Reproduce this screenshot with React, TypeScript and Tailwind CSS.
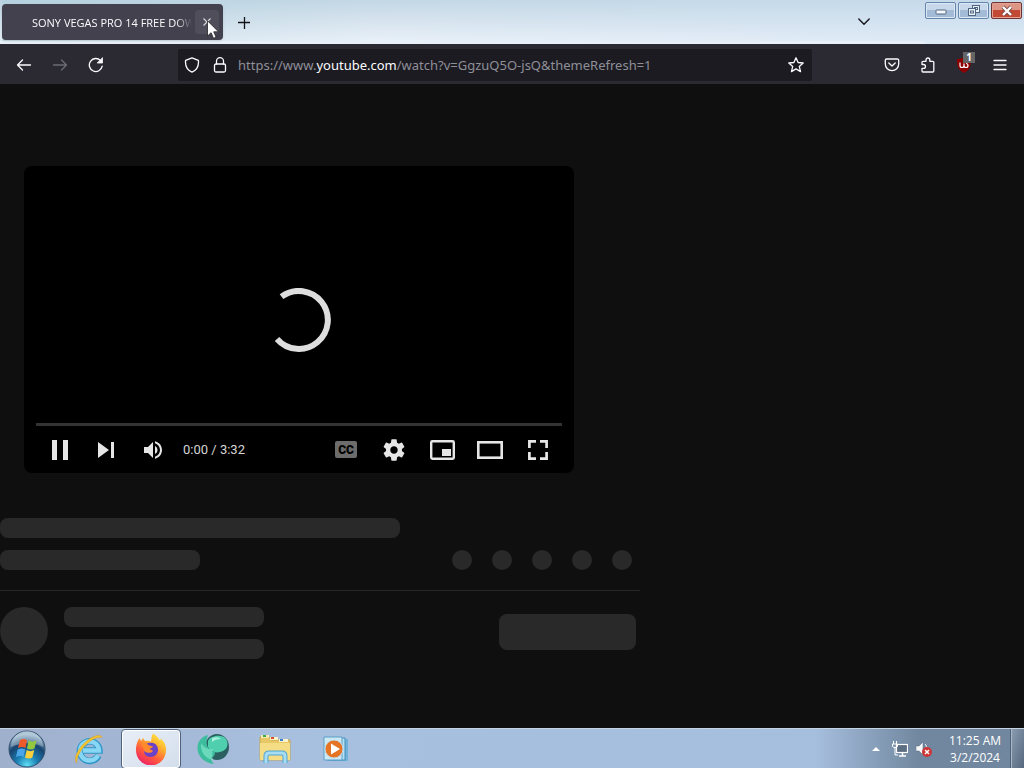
import type { ReactNode } from "react";

const urlParts = {
  prefix: "https://www.",
  domain: "youtube.com",
  path: "/watch?v=GgzuQ5O-jsQ&themeRefresh=1",
};

type ButtonProps = {
  label: string;
  children: ReactNode;
};

function ToolbarButton({ label, children }: ButtonProps) {
  return (
    <button
      type="button"
      aria-label={label}
      className="flex h-9 w-9 shrink-0 items-center justify-center rounded text-[#fbfbfe]"
    >
      {children}
    </button>
  );
}

function LineIcon({ children }: { children: ReactNode }) {
  return (
    <svg
      className="h-4 w-4"
      viewBox="0 0 16 16"
      fill="none"
      stroke="currentColor"
      strokeWidth="1.3"
      strokeLinecap="round"
      strokeLinejoin="round"
    >
      {children}
    </svg>
  );
}

function TabStrip() {
  return (
    <header className="flex h-11 items-start bg-linear-to-b from-[#bdd3e2] to-[#e9f0f8] pl-0.5">
      <div className="flex min-w-0 flex-1 items-start bg-linear-to-r from-[#a9cfdb]/40 via-white/10 via-40% to-[#d3e4f5]/40">
        <div className="relative mt-1 flex h-9 w-[221px] shrink-0 items-center rounded bg-[#42414d] pl-[30px] shadow">
          <span className="w-40 overflow-hidden mask-r-from-90% pt-0.5 text-[11px] whitespace-nowrap text-[#fbfbfe]">
            SONY VEGAS PRO 14 FREE DOW
          </span>
          <button
            type="button"
            aria-label="Close tab"
            className="ml-[3px] flex h-6 w-6 items-center justify-center rounded bg-[#4f4e5a] text-[#d8d8de]"
          >
            <svg
              className="h-2 w-2"
              viewBox="0 0 8 8"
              stroke="currentColor"
              strokeWidth="1.1"
            >
              <path d="M0.5 0.5l7 7M7.5 0.5l-7 7" />
            </svg>
          </button>
          <svg
            className="pointer-events-none absolute top-4 left-[205px] h-5 w-3"
            viewBox="0 0 12 20"
            aria-hidden="true"
          >
            <path
              d="M0.5 0.8V16l3.6-3.3 2.4 5.6 2.6-1.1-2.4-5.4h4.8z"
              fill="#fff"
              stroke="#222"
              strokeWidth="0.8"
            />
          </svg>
        </div>
        <button
          type="button"
          aria-label="New tab"
          className="mt-[5px] ml-[3px] flex h-9 w-9 items-center justify-center text-[#15141a]"
        >
          <svg
            className="h-3 w-3"
            viewBox="0 0 12 12"
            stroke="currentColor"
            strokeWidth="1.3"
          >
            <path d="M6.500 0v12M0 5.500h12" />
          </svg>
        </button>
        <button
          type="button"
          aria-label="List all tabs"
          className="mt-1 mr-[43px] ml-auto flex h-9 w-9 items-center justify-center text-[#15141a]"
        >
          <svg
            className="h-3 w-3"
            viewBox="0 0 12 12"
            fill="none"
            stroke="currentColor"
            strokeWidth="1.4"
            strokeLinecap="round"
          >
            <path d="M0.8 3l5.2 5.2L11.2 3" />
          </svg>
        </button>
      </div>
      <WindowControls />
    </header>
  );
}

function WindowControls() {
  return (
    <div className="flex gap-0.5 self-stretch bg-[#d3e4f5]/40 pt-0.5 pr-0.5">
      <button
        type="button"
        aria-label="Minimize"
        className="flex h-[17px] w-[31px] items-center justify-center rounded-xs border border-[#6685ab] bg-linear-to-b from-[#c6d8ea] from-50% to-[#a3bbd6] to-50% shadow-[inset_0_0_0_1px_#dbe8f5]"
      >
        <svg className="h-3 w-3" viewBox="0 0 12 12">
          <rect
            x="1"
            y="5"
            width="10"
            height="4"
            rx="0.5"
            fill="#f4f8fc"
            stroke="#536680"
          />
        </svg>
      </button>
      <button
        type="button"
        aria-label="Restore"
        className="flex h-[17px] w-[31px] items-center justify-center rounded-xs border border-[#6685ab] bg-linear-to-b from-[#c6d8ea] from-50% to-[#a3bbd6] to-50% shadow-[inset_0_0_0_1px_#dbe8f5]"
      >
        <svg
          className="h-3 w-3"
          viewBox="0 0 12 12"
          fill="#e8f0f8"
          stroke="#536680"
        >
          <rect x="4.5" y="0.5" width="7" height="7" />
          <rect x="6.5" y="2.5" width="3" height="2" />
          <rect x="0.5" y="3.5" width="7" height="7" />
          <rect x="2.5" y="6" width="3" height="2" />
        </svg>
      </button>
      <button
        type="button"
        aria-label="Close"
        className="flex h-[17px] w-[31px] items-center justify-center rounded-xs border border-[#6d3430] bg-linear-to-b from-[#dd9585] from-45% to-[#c24a34] to-50% shadow-[inset_0_0_0_1px_#e5a294]"
      >
        <svg className="h-3 w-3" viewBox="0 0 12 12" fill="none">
          <path d="M2 2l8 8M10 2l-8 8" stroke="#7a4a48" strokeWidth="4" />
          <path d="M2 2l8 8M10 2l-8 8" stroke="#fff" strokeWidth="2.4" />
        </svg>
      </button>
    </div>
  );
}

function AddressBar() {
  return (
    <div className="ml-16 flex h-8 min-w-0 flex-1 items-center rounded-xs bg-[#1c1b22] px-1.5 text-[#fbfbfe]">
      <button
        type="button"
        aria-label="Tracking protection"
        className="flex h-7 w-4 shrink-0 items-center justify-center"
      >
        <LineIcon>
          <path d="M8 0.8l6.4 2.6c.5 4.600-1.200 9.400-6.400 11.800C2.800 12.800 1.100 8 1.600 3.400z" />
        </LineIcon>
      </button>
      <button
        type="button"
        aria-label="Site information"
        className="ml-3 flex h-7 w-4 shrink-0 items-center justify-center"
      >
        <LineIcon>
          <path d="M4.500 7V4.200a3.500 3.500 0 0 1 7 0V7" />
          <rect x="2.500" y="7" width="11" height="8" rx="1.500" />
        </LineIcon>
      </button>
      <div className="relative ml-2.5 flex h-7 min-w-0 flex-1 items-center font-['Noto_Sans',sans-serif] text-[13px]">
        <input
          type="text"
          aria-label="Address"
          defaultValue={urlParts.prefix + urlParts.domain + urlParts.path}
          className="w-full bg-transparent pt-0.5 text-transparent caret-white outline-none"
        />
        {/* domain highlight sits over the field */}
        <div
          aria-hidden="true"
          className="pointer-events-none absolute inset-0 flex items-center overflow-hidden pt-0.5 whitespace-nowrap text-[#8f8f98]"
        >
          <span>{urlParts.prefix}</span>
          <span className="text-[#fbfbfe]">{urlParts.domain}</span>
          <span>{urlParts.path}</span>
        </div>
      </div>
      <button
        type="button"
        aria-label="Bookmark this page"
        className="mr-0.5 flex h-7 w-4 shrink-0 items-center justify-center"
      >
        <LineIcon>
          <path d="M8 0.800l2.100 4.700 5.100.5-3.900 3.400 1.200 5.200L8 11.900l-4.500 2.700 1.200-5.200L0.800 6l5.100-.5z" />
        </LineIcon>
      </button>
    </div>
  );
}

function Toolbar() {
  return (
    <nav className="flex h-10 items-center bg-[#2b2a33] px-1.5 pt-px">
      <ToolbarButton label="Back">
        <LineIcon>
          <path d="M14.500 8H1.500M6.500 3L1.500 8l5 5" />
        </LineIcon>
      </ToolbarButton>
      <ToolbarButton label="Forward">
        <span className="text-[#6b6b74]">
          <LineIcon>
            <path d="M1.500 8h13M9.500 3l5 5-5 5" />
          </LineIcon>
        </span>
      </ToolbarButton>
      <ToolbarButton label="Reload">
        <LineIcon>
          <path d="M14.200 9.200A6.500 6.500 0 1 1 12.600 3.600" />
          <path d="M14.500 1v5h-5z" fill="currentColor" strokeWidth="0.8" />
        </LineIcon>
      </ToolbarButton>
      <AddressBar />
      <div className="ml-[62px] flex">
        <ToolbarButton label="Save to Pocket">
          <LineIcon>
            <path d="M2.500 2h11a1.200 1.200 0 0 1 1.200 1.200V7a6.700 6.700 0 0 1-13.400 0V3.200A1.200 1.200 0 0 1 2.500 2z" />
            <path d="M4.800 6L8 9l3.200-3" />
          </LineIcon>
        </ToolbarButton>
        <ToolbarButton label="Extensions">
          <LineIcon>
            <path d="M2 7.500V5.300a1 1 0 0 1 1-1h3V2.900a1.900 1.900 0 0 1 3.800 0v1.400h3a1 1 0 0 1 1 1v8.700a1 1 0 0 1-1 1H3a1 1 0 0 1-1-1v-2.600h1.500a1.900 1.900 0 0 0 0-3.900z" />
          </LineIcon>
        </ToolbarButton>
        <ToolbarButton label="uBlock Origin">
          <span className="relative">
            <svg className="h-4 w-4" viewBox="0 0 16 16" fill="none">
              <path
                d="M8 0c2.500 1.600 4.500 2 7 2 0 7-1 11-7 14C2 13 1 9 1 2c2.500 0 4.500-.4 7-2z"
                fill="#8c0000"
              />
              <path
                d="M4 5.500v3a2 2 0 0 0 4 0v-2m0 2a2 2 0 1 0 2-2"
                stroke="#fff"
                strokeWidth="1.200"
              />
            </svg>
            <span className="absolute -top-[5px] left-[7px] flex h-[11px] w-3 items-center justify-center bg-[#666] text-[10px] leading-none font-bold text-white">
              1
            </span>
          </span>
        </ToolbarButton>
        <ToolbarButton label="Open application menu">
          <LineIcon>
            <path d="M2 3.500h12M2 8h12M2 12.500h12" />
          </LineIcon>
        </ToolbarButton>
      </div>
    </nav>
  );
}

function PlayerButton({ label, children }: ButtonProps) {
  return (
    <button
      type="button"
      aria-label={label}
      className="flex h-full w-12 items-center justify-center"
    >
      {children}
    </button>
  );
}

function Player() {
  return (
    <section
      aria-label="Video player"
      className="relative mr-[66px] ml-6 flex h-[307px] flex-col justify-end rounded-lg bg-black px-3 text-[#e6e6e6]"
    >
      <div className="pointer-events-none absolute inset-0 flex items-center justify-center">
        <svg className="h-16 w-16" viewBox="0 0 64 64" fill="none">
          <path
            d="M14.500 8.700A29 29 0 1 1 10 51"
            stroke="#dedede"
            strokeWidth="6"
          />
        </svg>
      </div>
      <div className="h-[3px] bg-[#333]" />
      <div className="flex h-[47px] items-center">
        <div className="flex h-full flex-1 items-center">
          <PlayerButton label="Pause">
            <svg className="h-5 w-4" viewBox="0 0 16 20" fill="currentColor">
              <path d="M0 0h5v20H0zM11 0h5v20h-5z" />
            </svg>
          </PlayerButton>
          <button
            type="button"
            aria-label="Next"
            className="flex h-full w-11 items-center justify-center"
          >
            <svg className="h-4 w-4" viewBox="0 0 16 16" fill="currentColor">
              <path d="M0 0l11 8-11 8zM13 0h3v16h-3z" />
            </svg>
          </button>
          <button
            type="button"
            aria-label="Mute"
            className="flex h-full w-[50px] items-center justify-center"
          >
            <svg
              className="h-[18px] w-[18px]"
              viewBox="8 9 18 18"
              fill="currentColor"
            >
              <path d="M8 21h4l5 5V10l-5 5H8zM19 14v8c1.480-.68 2.500-2.230 2.500-4 0-1.740-1.020-3.260-2.500-4zM19 11.290c2.890.86 5 3.540 5 6.710s-2.110 5.850-5 6.710v2.060c4.010-.91 7-4.490 7-8.770s-2.990-7.860-7-8.770z" />
            </svg>
          </button>
          <span className="ml-[5px] font-[Roboto,sans-serif] text-[13px] text-[#d6d6d6]">
            0:00 / 3:32
          </span>
        </div>
        <PlayerButton label="Subtitles">
          <span className="flex h-[17px] w-[22px] items-center justify-center rounded-xs bg-[#6c6c6c] font-[Roboto,sans-serif] text-xs font-black text-black">
            CC
          </span>
        </PlayerButton>
        <PlayerButton label="Settings">
          <svg className="h-12 w-12" viewBox="0 0 36 36" fill="currentColor">
            <path d="m 23.94,18.78 c .03,-0.25 .05,-0.51 .05,-0.78 0,-0.27 -0.02,-0.52 -0.05,-0.78 l 1.68,-1.32 c .15,-0.12 .19,-0.33 .09,-0.51 l -1.6,-2.76 c -0.09,-0.17 -0.31,-0.24 -0.48,-0.17 l -1.99,.8 c -0.41,-0.32 -0.86,-0.58 -1.35,-0.78 l -0.30,-2.12 c -0.02,-0.19 -0.19,-0.33 -0.39,-0.33 l -3.2,0 c -0.2,0 -0.36,.14 -0.39,.33 l -0.30,2.12 c -0.48,.2 -0.93,.47 -1.35,.78 l -1.99,-0.8 c -0.18,-0.07 -0.39,0 -0.48,.17 l -1.6,2.76 c -0.10,.17 -0.05,.39 .09,.51 l 1.68,1.32 c -0.03,.25 -0.05,.52 -0.05,.78 0,.26 .02,.52 .05,.78 l -1.68,1.32 c -0.15,.12 -0.19,.33 -0.09,.51 l 1.6,2.76 c .09,.17 .31,.24 .48,.17 l 1.99,-0.8 c .41,.32 .86,.58 1.35,.78 l .30,2.12 c .02,.19 .19,.33 .39,.33 l 3.2,0 c .2,0 .36,-0.14 .39,-0.33 l .30,-2.12 c .48,-0.2 .93,-0.47 1.35,-0.78 l 1.99,.8 c .18,.07 .39,0 .48,-0.17 l 1.6,-2.76 c .09,-0.17 .05,-0.39 -0.09,-0.51 l -1.68,-1.32 0,0 z m -5.94,2.01 c -1.54,0 -2.8,-1.25 -2.8,-2.8 0,-1.54 1.25,-2.8 2.8,-2.8 1.54,0 2.8,1.25 2.8,2.8 0,1.54 -1.25,2.8 -2.8,2.8 l 0,0 z" />
          </svg>
        </PlayerButton>
        <PlayerButton label="Miniplayer">
          <svg className="h-5 w-[25px]" viewBox="0 0 25 20" fill="currentColor">
            <rect
              x="1.200"
              y="1.200"
              width="22.600"
              height="17.600"
              rx="1.200"
              fill="none"
              stroke="currentColor"
              strokeWidth="2.400"
            />
            <rect x="12" y="9" width="9" height="7" />
          </svg>
        </PlayerButton>
        <PlayerButton label="Theater mode">
          <svg className="h-[18px] w-[26px]" viewBox="0 0 26 18" fill="none">
            <rect
              x="1.300"
              y="1.300"
              width="23.400"
              height="15.400"
              stroke="currentColor"
              strokeWidth="2.600"
            />
          </svg>
        </PlayerButton>
        <PlayerButton label="Full screen">
          <svg
            className="h-5 w-5"
            viewBox="0 0 20 20"
            fill="none"
            stroke="currentColor"
            strokeWidth="2.700"
          >
            <path d="M1.400 8V1.400H8M12 1.400h6.600V8M18.600 12v6.600H12M8 18.600H1.400V12" />
          </svg>
        </PlayerButton>
      </div>
    </section>
  );
}

function WatchSkeleton() {
  return (
    <div aria-hidden="true" className="mt-[45px]">
      <div className="h-5 w-[400px] rounded-lg bg-[#292929]" />
      <div className="mt-3 flex justify-between pr-2">
        <div className="h-5 w-[200px] rounded-lg bg-[#292929]" />
        <div className="flex gap-5">
          {[0, 1, 2, 3, 4].map((i) => (
            <div key={i} className="h-5 w-5 rounded-full bg-[#292929]" />
          ))}
        </div>
      </div>
      <div className="mt-5 flex border-t border-[#272727] pt-4 pr-1">
        <div className="h-12 w-12 rounded-full bg-[#292929]" />
        <div className="ml-4 flex flex-1 flex-col gap-3">
          <div className="h-5 w-[200px] rounded-lg bg-[#292929]" />
          <div className="h-5 w-[200px] rounded-lg bg-[#292929]" />
        </div>
        <div className="mt-[7px] h-9 w-[137px] rounded-lg bg-[#292929]" />
      </div>
    </div>
  );
}

function TaskButton({ label, children }: ButtonProps) {
  return (
    <button
      type="button"
      aria-label={label}
      className="flex h-10 w-15 items-center justify-center"
    >
      {children}
    </button>
  );
}

function StartOrb() {
  return (
    <svg className="h-[38px] w-[38px]" viewBox="0 0 38 38">
      <defs>
        <radialGradient id="orb" cx="50%" cy="95%" r="85%">
          <stop offset="0" stopColor="#5fe0f5" />
          <stop offset="0.35" stopColor="#1b7fb4" />
          <stop offset="0.7" stopColor="#17446f" />
          <stop offset="1" stopColor="#8fb0c8" />
        </radialGradient>
      </defs>
      <circle
        cx="19"
        cy="19"
        r="18"
        fill="url(#orb)"
        stroke="#34506e"
        strokeWidth="1"
      />
      <path d="M3 17a16 16 0 0 1 32 0c-8-5-21-5-32 0z" fill="#fff" opacity="0.3" />
      <path d="M12 10c3-1.500 5-1.200 7 0l-1.500 8c-2.500-1.400-4.800-1.400-7.500 0z" fill="#ee5a2a" />
      <path d="M20.500 10.500c2.500 1.500 5 1.500 8 0l-2 8c-2.500 1.400-5 1.400-7.500 0z" fill="#93c83e" />
      <path d="M9.700 19.500c2.700-1.400 5-1.400 7.500 0l-1.700 7.500c-2.500-1.400-5-1.200-7.500 0z" fill="#4aa5e8" />
      <path d="M18.700 20c2.500 1.500 5 1.500 7.500 0l-1.800 7.500c-2.500 1.300-5 1.300-7.400 0z" fill="#fbd03c" />
    </svg>
  );
}

function ExplorerEIcon() {
  return (
    <svg className="h-8 w-8" viewBox="0 0 32 32" fill="none">
      <path
        d="M25.500 22.500a9.800 9.800 0 1 1 1-5H9"
        stroke="#2f95c8"
        strokeWidth="6.500"
      />
      <path
        d="M25 22.200a9.500 9.500 0 1 1 1-4.700H10"
        stroke="#86d6f4"
        strokeWidth="4.500"
      />
      <path
        d="M3.500 30C-1 24 9 9 20 4c4-2 8-2.500 9 .5C26 3.500 21 5 16 9 9 14.500 3.500 23 3.500 30z"
        fill="#f5c62c"
        stroke="#d69b1b"
        strokeWidth="0.500"
      />
    </svg>
  );
}

function FirefoxIcon() {
  return (
    <svg className="h-8 w-8" viewBox="0 0 32 32">
      <defs>
        <linearGradient id="fox" x1="0.85" y1="0" x2="0.25" y2="1">
          <stop offset="0" stopColor="#fff04a" />
          <stop offset="0.35" stopColor="#ffb02e" />
          <stop offset="0.65" stopColor="#ff5f3a" />
          <stop offset="1" stopColor="#ec1d68" />
        </linearGradient>
      </defs>
      <path
        d="M18 .5c4 2 5.500 5 7 7l1-2c4 4 5.500 8 5 12a15 15 0 0 1-30 0C1 12 2 9 4.500 5L6 8l2-3 2 3c2-.5 4-.4 6 .500C16.500 5 16.500 3 18 .500z"
        fill="url(#fox)"
      />
      <path
        d="M11 11c4-2 11-2 12 5 .5 5-3.500 8-7.500 8S9 21 9 18l5 1c2 0 3-1 4-2-3 0-3.500-1-3-2l3-2c-3 0-5-.5-7-2z"
        fill="#6b42c8"
      />
      <path d="M6 10c4-1 6 .500 8 2.500 1 .500 4 .500 4 1.500l-3.500 2c0 2 2 2 3.500 2-2 3-6 1.500-8 1z" fill="#ff8a2d" />
    </svg>
  );
}

function GlobeIcon() {
  return (
    <svg className="h-8 w-8" viewBox="0 0 32 32">
      <ellipse cx="20" cy="14" rx="12" ry="13" fill="#2b5f60" />
      <path d="M11 8c1-5 14-8 18-2 3 5 1 10-3 12-6 3-13 1-15-4z" fill="#4fcfae" />
      <path d="M11 2C3 4-1 11 1 19c2 6 7 11 16 12-2-2-3-4-3-7 3 0 4-2 4-5-5 0-7-4-8-7-1-3 0-7 1-10z" fill="#3dbd9d" />
      <path d="M4 10c3 5 8 7 12 6-1 4-1 7 0 11C8 26 3 18 4 10z" fill="#7fe5c9" opacity="0.7" />
      <path d="M15 5c3-1 7-1 9 1-3 0-7 1-9 3z" fill="#a5f0db" />
    </svg>
  );
}

function FolderIcon() {
  return (
    <svg className="h-8 w-8" viewBox="0 0 32 32">
      <path d="M1 4h9l2 3h19v20H1z" fill="#e7c766" stroke="#c09f42" strokeWidth="0.800" />
      <path d="M2 2h8v3H2z" fill="#f6e8a5" />
      <path d="M11 4h8v3h-8zM20 6h9v3h-9z" fill="#f9f2cb" />
      <path d="M4 2h3v2H4z" fill="#3aa956" />
      <path d="M12 4h3v2h-3z" fill="#d9502e" />
      <path d="M21 6h3v2h-3z" fill="#3a7fc8" />
      <path d="M1 10h30v17H1z" fill="#f4dd85" />
      <path
        d="M7 30v-7c0-2 1-3 3-3h13c2 0 3 1 3 3v7"
        fill="none"
        stroke="#4fa6d5"
        strokeWidth="5"
      />
      <path
        d="M7 30v-7c0-2 1-3 3-3h13c2 0 3 1 3 3v7"
        fill="none"
        stroke="#a8dcf3"
        strokeWidth="3"
      />
    </svg>
  );
}

function MediaPlayerIcon() {
  return (
    <svg className="h-8 w-8" viewBox="0 0 32 32">
      <path d="M9 6h18v22H9z" fill="#6fb2da" />
      <path d="M6 5h18v22H6z" fill="#b6dff2" stroke="#468db8" />
      <path d="M3 4h18v23H3z" fill="#cce9f5" stroke="#5b9fc7" />
      <circle cx="13" cy="16" r="9" fill="#e57424" stroke="#c3dbe7" strokeWidth="1" />
      <path d="M10 10.500l9 5.500-9 5.500z" fill="#fff" />
    </svg>
  );
}

function Taskbar() {
  return (
    <footer className="flex h-10 items-center border-t border-[#c5d3e2] bg-linear-to-r from-[#9fb0cc] from-0% via-[#a8c0df] via-30% to-[#a5bedd]">
      <button
        type="button"
        aria-label="Start"
        className="mr-[5px] flex h-10 w-[54px] items-center justify-center"
      >
        <StartOrb />
      </button>
      <div className="flex gap-0.5">
        <TaskButton label="Internet Explorer">
          <ExplorerEIcon />
        </TaskButton>
        <button
          type="button"
          aria-label="Firefox"
          className="flex h-10 w-15 items-center justify-center rounded-sm border border-[#4f627e] bg-linear-to-br from-[#e8eef6] to-[#d3deec] shadow-[inset_0_0_0_1px_#fff]"
        >
          <FirefoxIcon />
        </button>
        <TaskButton label="Web browser">
          <GlobeIcon />
        </TaskButton>
        <TaskButton label="File Explorer">
          <FolderIcon />
        </TaskButton>
        <TaskButton label="Media Player">
          <MediaPlayerIcon />
        </TaskButton>
      </div>
      <div className="ml-auto flex h-full items-center bg-linear-to-r from-transparent to-[#71879f] to-50% pl-12">
        <button
          type="button"
          aria-label="Show hidden icons"
          className="flex h-6 w-6 items-center justify-center"
        >
          <svg className="h-1 w-2" viewBox="0 0 8 4">
            <path d="M0 4l4-4 4 4z" fill="#fff" />
          </svg>
        </button>
        <button
          type="button"
          aria-label="Network"
          className="flex h-6 w-6 items-center justify-center"
        >
          <svg className="h-4 w-4" viewBox="0 0 16 16" fill="none" stroke="#fff">
            <rect x="4.500" y="3.500" width="11" height="8" fill="#5c6e82" strokeWidth="1.200" />
            <path d="M7 15h7M10.500 12v3" strokeWidth="1.500" />
            <path d="M1.500 0v3M4.500 0v3M.5 3h5v2.500l-1.500 1h-2l-1.500-1zM3 6.500V14h3" />
          </svg>
        </button>
        <button
          type="button"
          aria-label="Volume muted"
          className="flex h-6 w-6 items-center justify-center"
        >
          <svg className="h-4 w-4" viewBox="0 0 16 16">
            <path d="M0 5h3l4-4v13l-4-4H0z" fill="#f4f6f8" stroke="#58697c" strokeWidth="0.500" />
            <path d="M9 3c1 1 1.500 2 1.500 4" stroke="#fff" fill="none" />
            <circle cx="11" cy="11" r="5" fill="#cf3434" />
            <path d="M9 9l4 4M13 9l-4 4" stroke="#fff" strokeWidth="1.500" />
          </svg>
        </button>
        <div className="ml-1 w-[70px] text-center text-xs leading-[17px] text-white">
          <p>11:25 AM</p>
          <p>3/2/2024</p>
        </div>
        <button
          type="button"
          aria-label="Show desktop"
          className="h-full w-3.5 border-l border-[#4d6075] bg-linear-to-br from-[#8b9db1] to-[#55687d] shadow-[inset_1px_0_0_#a9b8c8]"
        />
      </div>
    </footer>
  );
}

function App() {
  return (
    <div className="flex min-h-screen flex-col bg-[#0f0f0f] font-['Open_Sans',sans-serif]">
      <TabStrip />
      <Toolbar />
      <main className="flex-1 pt-[82px]">
        <div className="w-5/8">
          <Player />
          <WatchSkeleton />
        </div>
      </main>
      <Taskbar />
    </div>
  );
}

export default App;
